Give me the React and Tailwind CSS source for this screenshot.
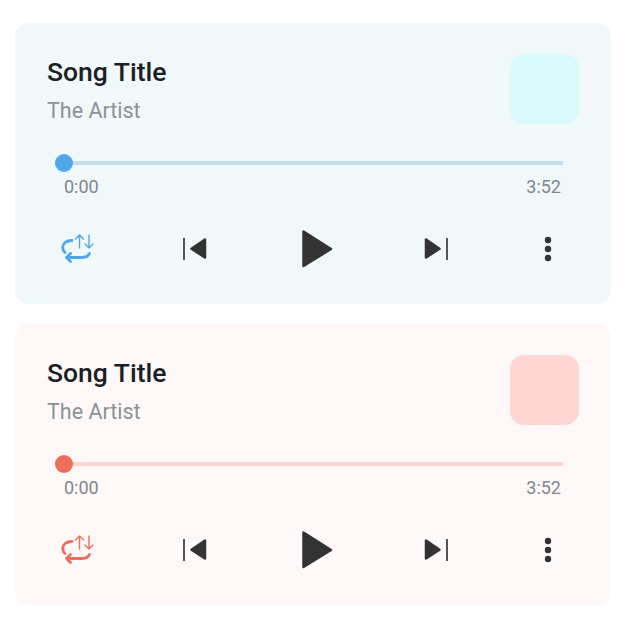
const PlayerCard = ({ bg, art, track, accent, icon }) => {
  return (
    <div className={`h-[281px] w-[596px] rounded-[14px] pt-[32px] ${bg}`}>
      <div className="flex items-start justify-between pl-[32px] pr-[32px]">
        <div>
          <h2 className="pt-[1px] text-[26.5px] font-medium leading-[32px] text-[#1b2025]">Song Title</h2>
          <p className="mt-[11px] text-[21.5px] leading-[24px] text-[#8b9297]">The Artist</p>
        </div>
        <div className={`-mt-[1px] h-[70px] w-[69px] rounded-[14px] ${art}`} />
      </div>

      <div className="relative ml-[40px] mt-[37px] h-[4px] w-[508px]">
        <div className={`h-[4px] w-full ${track}`} />
        <div className={`absolute left-0 top-[-7px] h-[18px] w-[18px] rounded-full ${accent}`} />
      </div>
      <div className="ml-[49px] mt-[11px] flex w-[497px] justify-between text-[18px] leading-[22px] text-[#7f878c]">
        <span>0:00</span>
        <span>3:52</span>
      </div>

      <div className="ml-[42px] mt-[31px] flex items-center">
        <svg width="40" height="40" viewBox="0 0 40 40" fill="none" strokeLinecap="round" strokeLinejoin="round" className={icon}>
          <path d="M15 11.5C9 11.5 5.7 14.5 5.7 18.5C5.7 20.5 6.5 22 8 23.5" stroke="currentColor" strokeWidth="2.8" />
          <path d="M9.5 28.5H25C29 28.5 31.5 27 32.5 24.5M13.5 24.5L9.5 28.5L13.5 32.5" stroke="currentColor" strokeWidth="2.8" />
          <path d="M22.5 19V6M18.5 10L22.5 6L26.5 10M32 6V19M28 15L32 19L36 15" stroke="currentColor" strokeWidth="1.4" />
        </svg>
        <svg width="40" height="40" viewBox="0 0 40 40" className="ml-[78px]">
          <rect x="8" y="9" width="2" height="22" fill="#555" />
          <path d="M30 10.5V28.5L16.5 19.8Z" fill="#333" stroke="#333" strokeWidth="2.5" strokeLinejoin="round" />
        </svg>
        <svg width="40" height="40" viewBox="0 0 40 40" className="ml-[82px]">
          <path d="M6.5 2.5V37L34 20Z" fill="#333" stroke="#333" strokeWidth="2.5" strokeLinejoin="round" />
        </svg>
        <svg width="40" height="40" viewBox="0 0 40 40" className="ml-[79px]">
          <path d="M10 10.5V28.5L23.5 19.8Z" fill="#333" stroke="#333" strokeWidth="2.5" strokeLinejoin="round" />
          <rect x="30" y="9" width="2" height="22" fill="#555" />
        </svg>
        <svg width="40" height="40" viewBox="0 0 40 40" className="ml-[72px]">
          <circle cx="20" cy="11" r="3.2" fill="#333" />
          <circle cx="20" cy="20" r="3.2" fill="#333" />
          <circle cx="20" cy="29" r="3.2" fill="#333" />
        </svg>
      </div>
    </div>
  );
};

export default function App() {
  return (
    <div className="flex h-[626px] w-[626px] flex-col gap-[20px] bg-white pl-[15px] pt-[23px] font-['Roboto',sans-serif]">
      <PlayerCard bg="bg-[#f0f8fa]" art="bg-[#d8fbfa]" track="bg-[#c3dcee]" accent="bg-[#51a6ea]" icon="text-[#51a6ea]" />
      <PlayerCard bg="bg-[#fff8f8]" art="bg-[#ffd6d1]" track="bg-[#fdd5cf]" accent="bg-[#ef705a]" icon="text-[#e8705c]" />
    </div>
  );
}
